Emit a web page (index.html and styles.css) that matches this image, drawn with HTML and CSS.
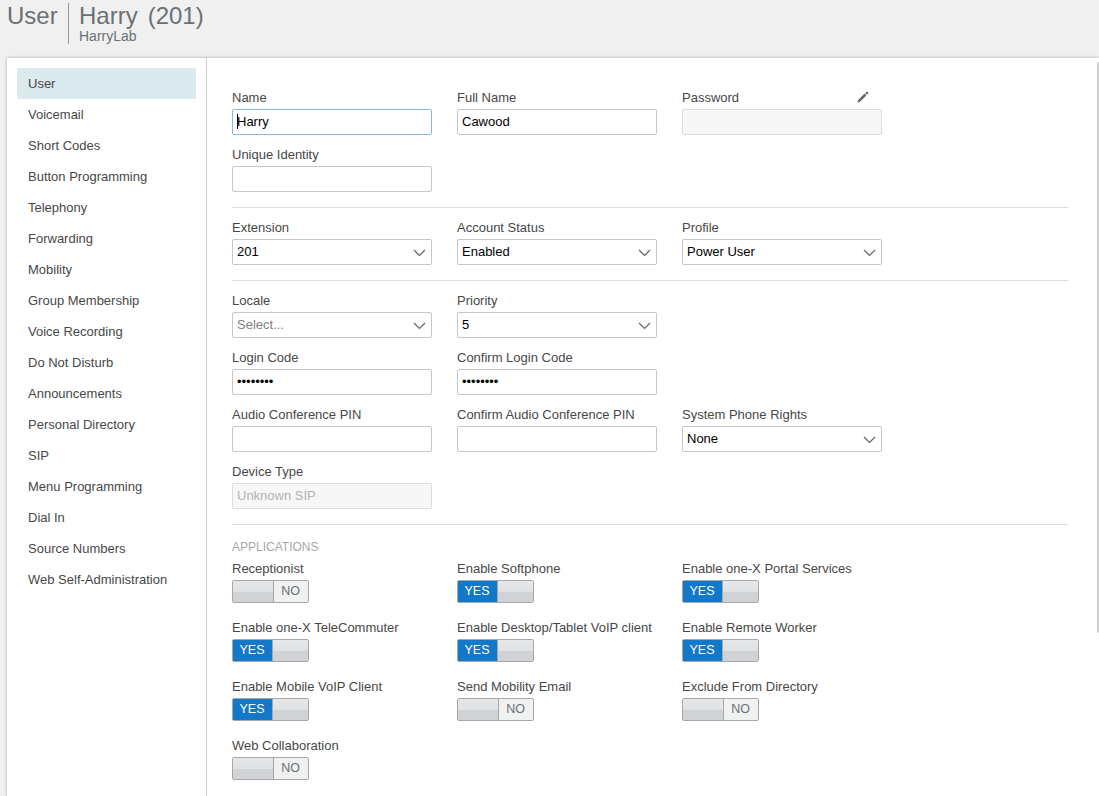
FILE: index.html
```html
<!DOCTYPE html>
<html lang="en">
<head>
    <meta charset="UTF-8">
    <meta name="viewport" content="width=device-width, initial-scale=1.0">
    <title>User - Harry (201)</title>
    <link rel="stylesheet" href="styles.css">
</head>
<body>
    <header class="header">
        <h1 class="section-title">User</h1>
        <div class="user-title">
            <h2><span>Harry</span> <span>(201)</span></h2>
            <p>HarryLab</p>
        </div>
    </header>

    <div class="panel">
        <nav class="sidebar">
            <a class="active" href="#">User</a>
            <a href="#">Voicemail</a>
            <a href="#">Short Codes</a>
            <a href="#">Button Programming</a>
            <a href="#">Telephony</a>
            <a href="#">Forwarding</a>
            <a href="#">Mobility</a>
            <a href="#">Group Membership</a>
            <a href="#">Voice Recording</a>
            <a href="#">Do Not Disturb</a>
            <a href="#">Announcements</a>
            <a href="#">Personal Directory</a>
            <a href="#">SIP</a>
            <a href="#">Menu Programming</a>
            <a href="#">Dial In</a>
            <a href="#">Source Numbers</a>
            <a href="#">Web Self-Administration</a>
        </nav>

        <main class="content">
            <section class="group">
                <div class="row">
                    <div class="field">
                        <label for="name">Name</label>
                        <div class="box focused"><span class="caret"></span><input type="text" id="name" value="Harry"></div>
                    </div>
                    <div class="field">
                        <label for="fullName">Full Name</label>
                        <div class="box"><input type="text" id="fullName" value="Cawood"></div>
                    </div>
                    <div class="field">
                        <div class="label-row">
                            <label for="password">Password</label>
                            <svg class="pencil" width="12" height="12" viewBox="0 0 12 12"><path d="M0.3 11.7 L1.2 9 L7.6 2.6 L9.4 4.4 L3 10.8 Z M8.3 1.9 L9.5 0.7 Q9.9 0.3 10.3 0.7 L11.3 1.7 Q11.7 2.1 11.3 2.5 L10.1 3.7 Z"/></svg>
                        </div>
                        <div class="box disabled"><input type="password" id="password" disabled></div>
                    </div>
                </div>
                <div class="row">
                    <div class="field">
                        <label for="identity">Unique Identity</label>
                        <div class="box"><input type="text" id="identity"></div>
                    </div>
                </div>
            </section>

            <section class="group">
                <div class="row">
                    <div class="field">
                        <label for="extension">Extension</label>
                        <div class="box"><input type="text" id="extension" value="201"><svg class="arrow" width="13" height="8" viewBox="0 0 13 8"><path d="M1 1 L6.5 6.5 L12 1"/></svg></div>
                    </div>
                    <div class="field">
                        <label for="status">Account Status</label>
                        <div class="box"><input type="text" id="status" value="Enabled"><svg class="arrow" width="13" height="8" viewBox="0 0 13 8"><path d="M1 1 L6.5 6.5 L12 1"/></svg></div>
                    </div>
                    <div class="field">
                        <label for="profile">Profile</label>
                        <div class="box"><input type="text" id="profile" value="Power User"><svg class="arrow" width="13" height="8" viewBox="0 0 13 8"><path d="M1 1 L6.5 6.5 L12 1"/></svg></div>
                    </div>
                </div>
            </section>

            <section class="group">
                <div class="row">
                    <div class="field">
                        <label for="locale">Locale</label>
                        <div class="box"><input type="text" id="locale" placeholder="Select..."><svg class="arrow" width="13" height="8" viewBox="0 0 13 8"><path d="M1 1 L6.5 6.5 L12 1"/></svg></div>
                    </div>
                    <div class="field">
                        <label for="priority">Priority</label>
                        <div class="box"><input type="text" id="priority" value="5"><svg class="arrow" width="13" height="8" viewBox="0 0 13 8"><path d="M1 1 L6.5 6.5 L12 1"/></svg></div>
                    </div>
                </div>
                <div class="row">
                    <div class="field">
                        <label for="loginCode">Login Code</label>
                        <div class="box"><input type="password" id="loginCode" value="12345678"></div>
                    </div>
                    <div class="field">
                        <label for="confirmCode">Confirm Login Code</label>
                        <div class="box"><input type="password" id="confirmCode" value="12345678"></div>
                    </div>
                </div>
                <div class="row">
                    <div class="field">
                        <label for="pin">Audio Conference PIN</label>
                        <div class="box"><input type="password" id="pin"></div>
                    </div>
                    <div class="field">
                        <label for="confirmPin">Confirm Audio Conference PIN</label>
                        <div class="box"><input type="password" id="confirmPin"></div>
                    </div>
                    <div class="field">
                        <label for="rights">System Phone Rights</label>
                        <div class="box"><input type="text" id="rights" value="None"><svg class="arrow" width="13" height="8" viewBox="0 0 13 8"><path d="M1 1 L6.5 6.5 L12 1"/></svg></div>
                    </div>
                </div>
                <div class="row">
                    <div class="field">
                        <label for="device">Device Type</label>
                        <div class="box disabled"><input type="text" id="device" value="Unknown SIP" disabled></div>
                    </div>
                </div>
            </section>

            <section class="applications">
                <h3>APPLICATIONS</h3>
                <div class="toggles">
                    <div class="field"><label>Receptionist</label><div class="toggle"><i></i><b>NO</b></div></div>
                    <div class="field"><label>Enable Softphone</label><div class="toggle on"><b>YES</b><i></i></div></div>
                    <div class="field"><label>Enable one-X Portal Services</label><div class="toggle on"><b>YES</b><i></i></div></div>
                    <div class="field"><label>Enable one-X TeleCommuter</label><div class="toggle on"><b>YES</b><i></i></div></div>
                    <div class="field"><label>Enable Desktop/Tablet VoIP client</label><div class="toggle on"><b>YES</b><i></i></div></div>
                    <div class="field"><label>Enable Remote Worker</label><div class="toggle on"><b>YES</b><i></i></div></div>
                    <div class="field"><label>Enable Mobile VoIP Client</label><div class="toggle on"><b>YES</b><i></i></div></div>
                    <div class="field"><label>Send Mobility Email</label><div class="toggle"><i></i><b>NO</b></div></div>
                    <div class="field"><label>Exclude From Directory</label><div class="toggle"><i></i><b>NO</b></div></div>
                    <div class="field"><label>Web Collaboration</label><div class="toggle"><i></i><b>NO</b></div></div>
                </div>
            </section>
        </main>
        <div class="scrollbar"></div>
    </div>
</body>
</html>
```
FILE: styles.css
```css
* {
    box-sizing: border-box;
}
body {
    margin: 0;
    height: 796px;
    display: flex;
    flex-direction: column;
    overflow: hidden;
    background-color: #f0f0f0;
    font-family: "Liberation Sans", Arial, sans-serif;
    font-size: 13px;
    color: #474747;
}
h1, h2, h3, p {
    margin: 0;
    font-weight: normal;
}
.header {
    display: flex;
    flex: 0 0 58px;
    padding: 3px 0 0 7px;
    color: #6b7074;
}
.section-title {
    width: 62px;
    height: 41px;
    border-right: 1px solid #969a9c;
    font-size: 24px;
    line-height: 26px;
}
.user-title {
    padding-left: 10px;
}
.user-title h2 {
    display: flex;
    gap: 10px;
    font-size: 24px;
    line-height: 26px;
}
.user-title p {
    font-size: 14px;
    line-height: 16px;
    margin-top: -1px;
}
.panel {
    display: flex;
    flex: 1;
    margin-left: 7px;
    background-color: #fff;
    box-shadow: 0 0 3px rgba(0, 0, 0, 0.3);
}
.sidebar {
    display: flex;
    flex-direction: column;
    flex: 0 0 200px;
    padding: 10px;
    border-right: 1px solid #ccc;
}
.sidebar a {
    height: 31px;
    padding-left: 11px;
    line-height: 31px;
    border-radius: 2px;
    color: #474747;
    text-decoration: none;
}
.sidebar .active {
    background-color: #dbeaef;
}
.content {
    flex: 1;
    padding: 30px 29px 0 25px;
}
.group {
    display: flex;
    flex-direction: column;
    gap: 10px;
    padding-bottom: 15px;
    margin-bottom: 10px;
    border-bottom: 1px solid #ddd;
}
.row {
    display: flex;
    gap: 25px;
}
.field {
    width: 200px;
}
.field label {
    display: block;
    height: 21px;
    line-height: 20px;
    white-space: nowrap;
}
.label-row {
    display: flex;
    justify-content: space-between;
    padding-right: 13px;
}
.pencil {
    margin-top: 3px;
    fill: #666;
}
.box {
    position: relative;
    display: flex;
    align-items: center;
    height: 26px;
    padding: 0 5px 0 4px;
    border: 1px solid #c4c6c9;
    border-radius: 2px;
    background-color: #fff;
}
.box input {
    flex: 1;
    min-width: 0;
    height: 22px;
    margin-bottom: 1px;
    padding: 0;
    border: none;
    outline: none;
    background: none;
    font: inherit;
    color: #000;
}
.box input::placeholder {
    color: #808080;
}
.box.focused {
    border-color: #86b7e6;
}
.box.disabled {
    border-color: #dcdcdc;
    background-color: #f7f7f7;
}
.box.disabled input {
    color: #b3b3b3;
}
.caret {
    position: absolute;
    left: 4px;
    top: 4px;
    width: 1px;
    height: 15px;
    background-color: #000;
}
.arrow {
    margin-top: 2px;
    fill: none;
    stroke: #666;
    stroke-width: 1.2;
}
.applications h3 {
    height: 18px;
    margin: 12px 0 4px;
    font-size: 12px;
    line-height: 20px;
    color: #a8a8a8;
}
.toggles {
    display: grid;
    grid-template-columns: repeat(3, 200px);
    gap: 15px 25px;
}
.toggle {
    display: flex;
    width: 77px;
    height: 23px;
    border: 1px solid #a5a7ab;
    border-radius: 2px;
    background-color: #f0f2f2;
}
.toggle b {
    flex: 1;
    padding-right: 1px;
    font-size: 12.5px;
    font-weight: normal;
    line-height: 20px;
    text-align: center;
    color: #6b7074;
}
.toggle i {
    width: 41px;
    border-right: 1px solid #a5a7ab;
    background: linear-gradient(#e6e7e9 0, #e0e1e3 11px, #d1d2d6 11px, #d1d2d6 100%);
}
.toggle.on b {
    background-color: #1378c8;
    color: #fff;
}
.toggle.on i {
    width: 36px;
    border-right: none;
    border-left: 1px solid #a5a7ab;
}
.scrollbar {
    width: 2px;
    height: 571px;
    margin-top: 4px;
    border-radius: 2px 0 0 2px;
    background-color: #ccc;
}
```
